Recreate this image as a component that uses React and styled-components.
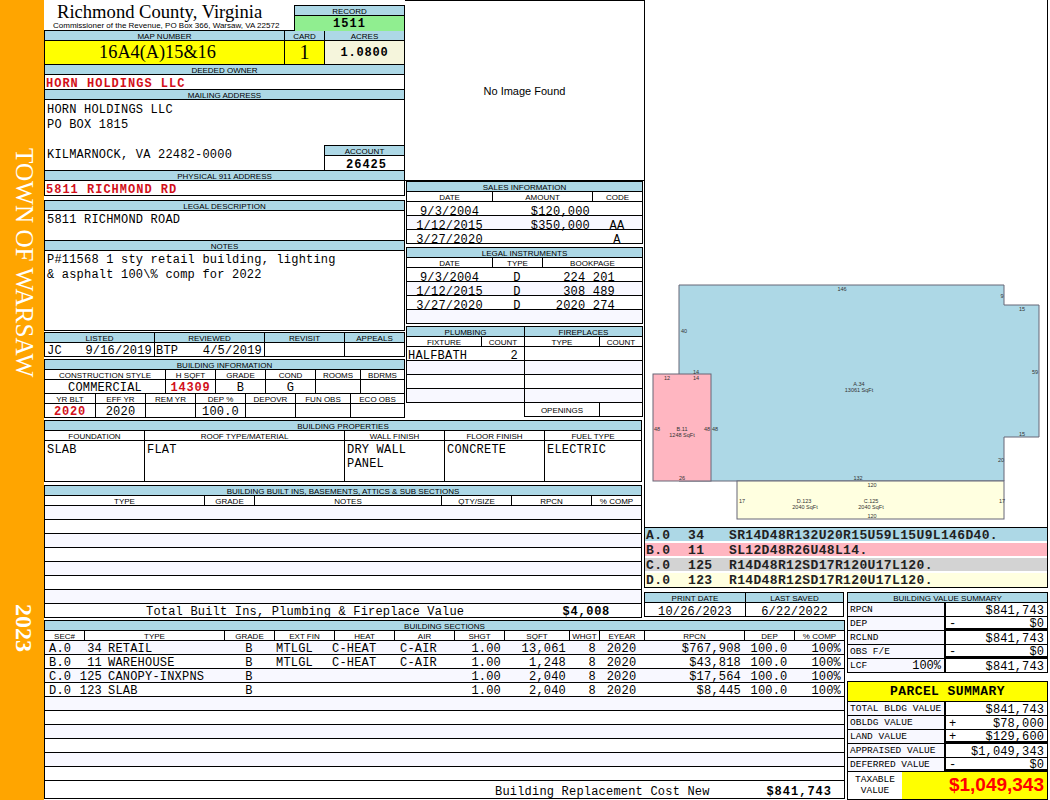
import React from 'react';
import styled, { createGlobalStyle } from 'styled-components';

const GlobalStyle = createGlobalStyle`
  * { box-sizing: border-box; }
  html, body { margin: 0; padding: 0; background: #fff; }
  body { font-family: "Liberation Mono", monospace; font-size: 12px; color: #000; }
`;

const BLUE = '#add8e6';
const GHOST = '#f8f8ff';
const RED = '#d2101a';

const Page = styled.div`
  display: flex;
  width: 1050px;
  height: 800px;
  overflow: hidden;
`;

const Sidebar = styled.aside`
  width: 44px;
  height: 800px;
  flex: none;
  background: #ffa500;
  color: #fff;
  display: flex;
  flex-direction: column;
  align-items: center;
  font-family: "Liberation Serif", serif;
`;

const SideTown = styled.div`
  writing-mode: vertical-rl;
  margin: 148px 0 0 3px;
  font-size: 25.2px;
  line-height: 30px;
  white-space: nowrap;
`;

const SideYear = styled.div`
  writing-mode: vertical-rl;
  margin: 227px 0 0 3px;
  font-size: 24px;
  line-height: 30px;
  font-weight: bold;
`;

const Sheet = styled.main`
  display: grid;
  grid-template-columns: 600px 201px 203px;
  grid-template-rows: 590px 30px 180px;
  grid-template-areas:
    "left sketch sketch"
    "left print summary"
    "sections sections summary";
`;

const LeftArea = styled.div`
  grid-area: left;
  display: flex;
  flex-direction: column;
`;

const Upper = styled.div`
  display: flex;
  height: 418px;
`;

const OwnerCol = styled.div`
  width: 361px;
  flex: none;
`;

const MidCol = styled.div`
  width: 239px;
  flex: none;
`;

const TitleRow = styled.div`
  display: flex;
  height: 30px;
`;

const TitleText = styled.div`
  width: 250px;
`;

const CountyName = styled.div`
  font-family: "Liberation Serif", serif;
  font-size: 18.6px;
  line-height: 20px;
  height: 20px;
  margin: 2px 0 0 13px;
  white-space: nowrap;
`;

const CountySub = styled.div`
  font-family: "Liberation Sans", sans-serif;
  font-size: 8px;
  line-height: 8px;
  margin-left: 9px;
  white-space: nowrap;
`;

const RecordBox = styled.div`
  width: 111px;
  height: 25px;
  margin-top: 5px;
  border: 1px solid #000;
  border-bottom: 0;
`;

const RecordValue = styled.div`
  height: 15px;
  background: #90ee90;
  text-align: center;
  font-weight: bold;
  line-height: 17px;
  letter-spacing: 1px;
`;

const Panel = styled.section`
  width: ${p => p.$w}px;
  margin-top: ${p => p.$mt || 0}px;
  margin-left: ${p => p.$ml || 0}px;
  border: 1px solid #000;
  border-bottom: 0;
  flex: none;
`;

const BarHead = styled.div`
  height: 10px;
  padding-top: 1px;
  background: ${BLUE};
  border-bottom: 1px solid #000;
  font-family: "Liberation Sans", sans-serif;
  font-size: 8px;
  line-height: 9px;
  text-align: center;
  white-space: nowrap;
`;

const Row = styled.div`
  display: grid;
  grid-template-columns: ${p => p.$cols || '1fr'};
  grid-template-rows: minmax(0, 1fr);
  height: ${p => p.$h || 14}px;
  background: ${p => p.$bg || (p.$alt ? GHOST : '#fff')};
  border-bottom: 1px solid #000;
`;

const Label = styled.div`
  display: flex;
  align-items: center;
  justify-content: center;
  min-width: 0;
  min-height: 0;
  padding-top: 2px;
  font-family: "Liberation Sans", sans-serif;
  font-size: 8px;
  white-space: nowrap;
  &:not(:first-child) { border-left: 1px solid #000; }
`;

const alignments = {
  right: 'flex-end',
  center: 'center',
  between: 'space-between',
};

// $dy moves the text down inside its row, $open drops the column rule
const Cell = styled.div`
  display: flex;
  align-items: ${p => p.$top ? 'flex-start' : 'center'};
  justify-content: ${p => alignments[p.$align] || 'flex-start'};
  min-width: 0;
  min-height: 0;
  padding: ${p => (p.$dy ?? 1) * 2}px ${p => p.$pr ?? 2}px 0 ${p => p.$pl ?? 2}px;
  background: ${p => p.$bg || 'transparent'};
  color: ${p => p.$color || '#000'};
  font-weight: ${p => p.$bold ? 'bold' : 'normal'};
  letter-spacing: ${p => p.$ls ?? 0.2}px;
  white-space: pre;
  &:not(:first-child) { border-left: ${p => p.$open ? 0 : 1}px solid #000; }
`;

const Text = styled.div`
  padding: ${p => p.$pt ?? 2}px 2px 0;
  line-height: ${p => p.$lh || 15}px;
  letter-spacing: 0.2px;
  white-space: pre-wrap;
  align-self: flex-start;
`;

const Serif = styled(Cell)`
  font-family: "Liberation Serif", serif;
  font-size: ${p => p.$size || 20}px;
  letter-spacing: 0;
  background: #ff0;
`;

const RedLine = styled.div`
  height: 15px;
  padding: 2px 0 0 1px;
  border-bottom: 1px solid #000;
  color: ${RED};
  font-weight: bold;
  line-height: 15px;
  letter-spacing: 1px;
`;

const MailingBody = styled.div`
  display: flex;
  justify-content: space-between;
  align-items: flex-end;
  height: 71px;
  border-bottom: 1px solid #000;
`;

const AccountBox = styled.div`
  width: 80px;
  border-top: 1px solid #000;
  border-left: 1px solid #000;
`;

const AccountValue = styled.div`
  height: 14px;
  padding: 2px 0 0 4px;
  line-height: 14px;
  text-align: center;
  font-weight: bold;
  letter-spacing: 1px;
`;

const TextBlock = styled.div`
  height: ${p => p.$h}px;
  border-bottom: 1px solid #000;
`;

const ImageBox = styled.div`
  display: flex;
  align-items: center;
  justify-content: center;
  height: 181px;
  border-top: 1px solid #000;
  border-bottom: 1px solid #000;
  font-family: "Liberation Sans", sans-serif;
  font-size: 11px;
`;

const PlumbingWrap = styled.div`
  display: flex;
  align-items: flex-start;
`;

const SketchArea = styled.div`
  grid-area: sketch;
  display: flex;
  flex-direction: column;
`;

const SketchBox = styled.div`
  height: 528px;
  border: 1px solid #000;
  border-top: 0;
  svg { display: block; }
`;

const SketchLabel = styled.text`
  font-family: "Liberation Sans", sans-serif;
  font-size: 5.5px;
  fill: #333;
  text-anchor: middle;
`;

const Legend = styled.div`
  border: 1px solid #000;
  border-top: 0;
`;

const LegendRow = styled.div`
  display: grid;
  grid-template-columns: 42px 41px 1fr;
  height: 15px;
  padding: 1px 0 0 1px;
  background: ${p => p.$bg};
  border-bottom: 2px solid #fff;
  font-size: 13px;
  font-weight: bold;
  line-height: 14px;
  color: #222;
  letter-spacing: 0.35px;
  white-space: pre;
  &:last-child { border-bottom: 0; height: 14px; }
`;

const PrintArea = styled.div`
  grid-area: print;
  padding-top: 2px;
`;

const SummaryArea = styled.div`
  grid-area: summary;
  padding: 2px 0 0 2px;
`;

const SumPanel = styled.section`
  width: 201px;
  margin-top: ${p => p.$mt || 0}px;
  border: 1px solid #000;
  border-bottom: ${p => p.$open ? 0 : '1px solid #000'};
`;

const SumRow = styled.div`
  display: grid;
  grid-template-columns: 98px 1fr;
  grid-template-rows: minmax(0, 1fr);
  height: 14px;
`;

const SumKey = styled.div`
  display: flex;
  align-items: center;
  justify-content: space-between;
  min-height: 0;
  padding: 0 3px 0 2px;
  background: ${GHOST};
  border-bottom: 1px solid #000;
  border-right: 2px solid #000;
  font-size: 9.5px;
  white-space: pre;
`;

const SumPercent = styled.span`
  font-size: 12px;
`;

const SumValue = styled.div`
  display: flex;
  align-items: center;
  justify-content: space-between;
  min-height: 0;
  padding: 2px 3px 0;
  border-bottom: ${p => p.$heavy ? 3 : 1}px solid #000;
  letter-spacing: 0.1px;
`;

const ParcelHead = styled.div`
  height: 20px;
  background: #ff0;
  border-bottom: 1px solid #000;
  text-align: center;
  font-size: 13px;
  font-weight: bold;
  line-height: 19px;
  letter-spacing: 0.4px;
  white-space: pre;
`;

const TaxRow = styled.div`
  display: grid;
  grid-template-columns: 54px 1fr;
  height: 27px;
`;

const TaxKey = styled.div`
  font-size: 9.5px;
  line-height: 11px;
  padding-top: 2px;
  text-align: center;
`;

const TaxValue = styled.div`
  background: #ff0;
  color: #f00;
  font-family: "Liberation Sans", sans-serif;
  font-size: 19px;
  font-weight: bold;
  line-height: 26px;
  text-align: right;
  padding-right: 3px;
`;

const SectionsArea = styled.div`
  grid-area: sections;
`;

const MAP_COLS = '239px 40px 80px';
const LISTED_COLS = '109px 110px 80px 60px';
const INFO_A = '120px 50px 50px 50px 45px 44px';
const INFO_B = '50px 50px 50px 50px 50px 55px 54px';
const SALES_COLS = '85px 100px 50px';
const LEGAL_COLS = '85px 50px 100px';
const PLUMB_COLS = '74px 43px';
const FIRE_COLS = '74px 43px';
const PROP_COLS = '99px 200px 100px 100px 97px';
const BUILT_COLS = '159px 50px 187px 70px 80px 50px';
const SEC_HEAD_COLS = '39px 140px 50px 60px 60px 60px 50px 65px 30px 45px 100px 50px 50px';
const SEC_ROW_COLS = '30px 27px 122px 50px 58px 68px 54px 50px 65px 30px 45px 100px 50px 50px';

const sales = [
  ['9/3/2004', '$120,000', ''],
  ['1/12/2015', '$350,000', 'AA'],
  ['3/27/2020', '', 'A'],
];

const instruments = [
  ['9/3/2004', 'D', '224 201'],
  ['1/12/2015', 'D', '308 489'],
  ['3/27/2020', 'D', '2020 274'],
  ['', '', ''],
];

const sections = [
  ['A.0', '34', 'RETAIL', 'B', 'MTLGL', 'C-HEAT', 'C-AIR', '1.00', '13,061', '8', '2020', '$767,908', '100.0', '100%'],
  ['B.0', '11', 'WAREHOUSE', 'B', 'MTLGL', 'C-HEAT', 'C-AIR', '1.00', '1,248', '8', '2020', '$43,818', '100.0', '100%'],
  ['C.0', '125', 'CANOPY-INXPNS', 'B', '', '', '', '1.00', '2,040', '8', '2020', '$17,564', '100.0', '100%'],
  ['D.0', '123', 'SLAB', 'B', '', '', '', '1.00', '2,040', '8', '2020', '$8,445', '100.0', '100%'],
];

const sketchLabels = [
  [842, 291, '146'], [1002, 298, '9'], [1022, 311, '15'], [684, 333, '40'],
  [696, 374, '14'], [667, 380, '12'], [696, 380, '14'], [1035, 374, '59'],
  [859, 386, 'A.34'], [859, 392, '13061 SqFt'], [657, 431, '48'], [682, 431, 'B.11'],
  [682, 437, '1248 SqFt'], [707, 431, '48'], [715, 431, '48'], [1022, 436, '15'],
  [1001, 462, '20'], [682, 480, '26'], [858, 480, '132'], [872, 487, '120'],
  [742, 503, '17'], [804, 503, 'D.123'], [805, 509, '2040 SqFt'], [871, 503, 'C.125'],
  [871, 509, '2040 SqFt'], [1002, 503, '17'], [872, 518, '120'],
];

const Labels = ({ items }) => items.map((t, i) => <Label key={i}>{t}</Label>);

function Sketch() {
  return (
    <svg width="402" height="527" viewBox="645 0 402 527">
      <polygon points="679,285 1004,285 1004,305 1039,305 1039,437 1004,437 1004,481 679,481" fill="#add8e6" stroke="#667" />
      <rect x="737" y="481" width="267" height="38" fill="#ffffe0" stroke="#667" />
      <rect x="653" y="374" width="58" height="107" fill="#ffb6c1" stroke="#667" />
      {sketchLabels.map(([x, y, t], i) => (
        <SketchLabel key={i} x={x} y={y}>{t}</SketchLabel>
      ))}
    </svg>
  );
}

export default function App() {
  return (
    <Page>
      <GlobalStyle />
      <Sidebar>
        <SideTown>TOWN OF WARSAW</SideTown>
        <SideYear>2023</SideYear>
      </Sidebar>
      <Sheet>
        <LeftArea>
          <Upper>
            <OwnerCol>
              <TitleRow>
                <TitleText>
                  <CountyName>Richmond County, Virginia</CountyName>
                  <CountySub>Commissioner of the Revenue, PO Box 366, Warsaw, VA 22572</CountySub>
                </TitleText>
                <RecordBox>
                  <BarHead>RECORD</BarHead>
                  <RecordValue>1511</RecordValue>
                </RecordBox>
              </TitleRow>
              <Panel $w={361}>
                <Row $cols={MAP_COLS} $h={10} $bg={BLUE}>
                  <Labels items={['MAP NUMBER', 'CARD', 'ACRES']} />
                </Row>
                <Row $cols={MAP_COLS} $h={24}>
                  <Serif $align="center" $size={18.3} $dy={0} $pr={16}>16A4(A)15&amp;16</Serif>
                  <Serif $align="center" $dy={0}>1</Serif>
                  <Cell $align="center" $bold $bg="#f5f5dc" $ls={0.8} $dy={0}>1.0800</Cell>
                </Row>
                <BarHead>DEEDED OWNER</BarHead>
                <RedLine>HORN HOLDINGS LLC</RedLine>
                <BarHead>MAILING ADDRESS</BarHead>
                <MailingBody>
                  <Text $pt={3}>{'HORN HOLDINGS LLC\nPO BOX 1815\n\nKILMARNOCK, VA 22482-0000'}</Text>
                  <AccountBox>
                    <BarHead>ACCOUNT</BarHead>
                    <AccountValue>26425</AccountValue>
                  </AccountBox>
                </MailingBody>
                <BarHead>PHYSICAL 911 ADDRESS</BarHead>
                <RedLine>5811 RICHMOND RD</RedLine>
              </Panel>
              <Panel $w={361} $mt={4}>
                <BarHead>LEGAL DESCRIPTION</BarHead>
                <TextBlock $h={30}><Text>5811 RICHMOND ROAD</Text></TextBlock>
                <BarHead>NOTES</BarHead>
                <TextBlock $h={80}>
                  <Text>{'P#11568 1 sty retail building, lighting\n& asphalt 100\\% comp for 2022'}</Text>
                </TextBlock>
              </Panel>
              <Panel $w={361} $mt={1}>
                <Row $cols={LISTED_COLS} $h={10} $bg={BLUE}>
                  <Labels items={['LISTED', 'REVIEWED', 'REVISIT', 'APPEALS']} />
                </Row>
                <Row $cols={LISTED_COLS}>
                  <Cell $align="between" $pl={2} $pr={2}><span>JC</span><span>9/16/2019</span></Cell>
                  <Cell $align="between" $pl={1} $pr={2}><span>BTP</span><span>4/5/2019</span></Cell>
                  <Cell />
                  <Cell />
                </Row>
              </Panel>
              <Panel $w={361} $mt={2}>
                <BarHead>BUILDING INFORMATION</BarHead>
                <Row $cols={INFO_A} $h={10}>
                  <Labels items={['CONSTRUCTION STYLE', 'H SQFT', 'GRADE', 'COND', 'ROOMS', 'BDRMS']} />
                </Row>
                <Row $cols={INFO_A}>
                  <Cell $align="center">COMMERCIAL</Cell>
                  <Cell $align="center" $bold $color={RED} $ls={0.8}>14309</Cell>
                  <Cell $align="center">B</Cell>
                  <Cell $align="center">G</Cell>
                  <Cell />
                  <Cell />
                </Row>
                <Row $cols={INFO_B} $h={10}>
                  <Labels items={['YR BLT', 'EFF YR', 'REM YR', 'DEP %', 'DEPOVR', 'FUN OBS', 'ECO OBS']} />
                </Row>
                <Row $cols={INFO_B}>
                  <Cell $align="center" $bold $color={RED} $ls={0.8}>2020</Cell>
                  <Cell $align="center">2020</Cell>
                  <Cell />
                  <Cell $align="center">100.0</Cell>
                  <Cell />
                  <Cell />
                  <Cell />
                </Row>
              </Panel>
            </OwnerCol>
            <MidCol>
              <ImageBox>No Image Found</ImageBox>
              <Panel $w={237} $ml={1}>
                <BarHead>SALES INFORMATION</BarHead>
                <Row $cols={SALES_COLS} $h={10}>
                  <Labels items={['DATE', 'AMOUNT', 'CODE']} />
                </Row>
                {sales.map((r, i) => (
                  <Row key={i} $cols={SALES_COLS} $alt={i % 2 === 1}>
                    <Cell $open $dy={3} $align="center">{r[0]}</Cell>
                    <Cell $open $dy={3} $align="right">{r[1]}</Cell>
                    <Cell $open $dy={3} $align="center">{r[2]}</Cell>
                  </Row>
                ))}
              </Panel>
              <Panel $w={237} $ml={1} $mt={3}>
                <BarHead>LEGAL INSTRUMENTS</BarHead>
                <Row $cols={LEGAL_COLS} $h={10}>
                  <Labels items={['DATE', 'TYPE', 'BOOKPAGE']} />
                </Row>
                {instruments.map((r, i) => (
                  <Row key={i} $cols={LEGAL_COLS} $alt={i % 2 === 1}>
                    <Cell $open $dy={3} $align="center">{r[0]}</Cell>
                    <Cell $open $dy={3} $align="center">{r[1]}</Cell>
                    <Cell $open $dy={3} $align="right" $pr={27}>{r[2]}</Cell>
                  </Row>
                ))}
              </Panel>
              <PlumbingWrap>
                <Panel $w={119} $ml={1} $mt={2}>
                  <BarHead>PLUMBING</BarHead>
                  <Row $cols={PLUMB_COLS} $h={10}>
                    <Labels items={['FIXTURE', 'COUNT']} />
                  </Row>
                  <Row $cols={PLUMB_COLS}>
                    <Cell $open $dy={2} $pl={1}>HALFBATH</Cell>
                    <Cell $open $dy={2} $align="right" $pr={6}>2</Cell>
                  </Row>
                  <Row $alt />
                  <Row />
                  <Row $alt />
                </Panel>
                <Panel $w={119} $ml={-1} $mt={2}>
                  <BarHead>FIREPLACES</BarHead>
                  <Row $cols={FIRE_COLS} $h={10}>
                    <Labels items={['TYPE', 'COUNT']} />
                  </Row>
                  <Row />
                  <Row $alt />
                  <Row />
                  <Row $alt />
                  <Row $cols={FIRE_COLS}>
                    <Label>OPENINGS</Label>
                    <Label />
                  </Row>
                </Panel>
              </PlumbingWrap>
            </MidCol>
          </Upper>
          <Panel $w={598} $mt={2}>
            <BarHead>BUILDING PROPERTIES</BarHead>
            <Row $cols={PROP_COLS} $h={10}>
              <Labels items={['FOUNDATION', 'ROOF TYPE/MATERIAL', 'WALL FINISH', 'FLOOR FINISH', 'FUEL TYPE']} />
            </Row>
            <Row $cols={PROP_COLS} $h={41}>
              {['SLAB', 'FLAT', 'DRY WALL\nPANEL', 'CONCRETE', 'ELECTRIC'].map((t, i) => (
                <Cell key={i} $top $dy={0} $pl={0} $pr={0}>
                  <Text $lh={14}>{t}</Text>
                </Cell>
              ))}
            </Row>
          </Panel>
          <Panel $w={598} $mt={3}>
            <BarHead>BUILDING BUILT INS, BASEMENTS, ATTICS &amp; SUB SECTIONS</BarHead>
            <Row $cols={BUILT_COLS} $h={10}>
              <Labels items={['TYPE', 'GRADE', 'NOTES', 'QTY/SIZE', 'RPCN', '% COMP']} />
            </Row>
            {[0, 1, 2, 3, 4, 5, 6].map(i => <Row key={i} $alt={i % 2 === 0} />)}
            <Row $cols="1fr auto">
              <Cell $pl={101}>Total Built Ins, Plumbing &amp; Fireplace Value</Cell>
              <Cell $open $bold $pr={31} $ls={0.7}>$4,008</Cell>
            </Row>
          </Panel>
        </LeftArea>

        <SketchArea>
          <SketchBox><Sketch /></SketchBox>
          <Legend>
            <LegendRow $bg="#add8e6"><span>A.0</span><span>34</span><span>SR14D48R132U20R15U59L15U9L146D40.</span></LegendRow>
            <LegendRow $bg="#ffb6c1"><span>B.0</span><span>11</span><span>SL12D48R26U48L14.</span></LegendRow>
            <LegendRow $bg="#d3d3d3"><span>C.0</span><span>125</span><span>R14D48R12SD17R120U17L120.</span></LegendRow>
            <LegendRow $bg="#ffffe0"><span>D.0</span><span>123</span><span>R14D48R12SD17R120U17L120.</span></LegendRow>
          </Legend>
        </SketchArea>

        <PrintArea>
          <Panel $w={200}>
            <Row $cols="100px 98px" $h={10} $bg={BLUE}>
              <Labels items={['PRINT DATE', 'LAST SAVED']} />
            </Row>
            <Row $cols="100px 98px">
              <Cell $dy={2} $align="center">10/26/2023</Cell>
              <Cell $dy={2} $align="center">6/22/2022</Cell>
            </Row>
          </Panel>
        </PrintArea>

        <SummaryArea>
          <SumPanel $open>
            <BarHead>BUILDING VALUE SUMMARY</BarHead>
            <SumRow><SumKey>RPCN</SumKey><SumValue><span /><span>$841,743</span></SumValue></SumRow>
            <SumRow><SumKey>DEP</SumKey><SumValue $heavy><span>-</span><span>$0</span></SumValue></SumRow>
            <SumRow><SumKey>RCLND</SumKey><SumValue><span /><span>$841,743</span></SumValue></SumRow>
            <SumRow><SumKey>OBS F/E</SumKey><SumValue $heavy><span>-</span><span>$0</span></SumValue></SumRow>
            <SumRow>
              <SumKey>LCF<SumPercent>100%</SumPercent></SumKey>
              <SumValue><span /><span>$841,743</span></SumValue>
            </SumRow>
          </SumPanel>
          <SumPanel $mt={8}>
            <ParcelHead>PARCEL SUMMARY</ParcelHead>
            <SumRow><SumKey>TOTAL BLDG VALUE</SumKey><SumValue><span /><span>$841,743</span></SumValue></SumRow>
            <SumRow><SumKey>OBLDG VALUE</SumKey><SumValue><span>+</span><span>$78,000</span></SumValue></SumRow>
            <SumRow><SumKey>LAND VALUE</SumKey><SumValue $heavy><span>+</span><span>$129,600</span></SumValue></SumRow>
            <SumRow><SumKey>APPRAISED VALUE</SumKey><SumValue><span /><span>$1,049,343</span></SumValue></SumRow>
            <SumRow><SumKey>DEFERRED VALUE</SumKey><SumValue $heavy><span>-</span><span>$0</span></SumValue></SumRow>
            <TaxRow>
              <TaxKey>TAXABLE<br />VALUE</TaxKey>
              <TaxValue>$1,049,343</TaxValue>
            </TaxRow>
          </SumPanel>
        </SummaryArea>

        <SectionsArea>
          <Panel $w={801}>
            <BarHead>BUILDING SECTIONS</BarHead>
            <Row $cols={SEC_HEAD_COLS} $h={10}>
              <Labels items={['SEC#', 'TYPE', 'GRADE', 'EXT FIN', 'HEAT', 'AIR', 'SHGT', 'SQFT', 'WHGT', 'EYEAR', 'RPCN', 'DEP', '% COMP']} />
            </Row>
            {sections.map((r, i) => (
              <Row key={i} $cols={SEC_ROW_COLS} $alt={i % 2 === 0}>
                <Cell $open $pl={4} $pr={0}>{r[0]}</Cell>
                <Cell $open $align="right" $pl={0} $pr={0}>{r[1]}</Cell>
                <Cell $open $pl={6} $pr={0}>{r[2]}</Cell>
                <Cell $open $align="center">{r[3]}</Cell>
                <Cell $open $pl={2} $pr={0}>{r[4]}</Cell>
                <Cell $open $pl={0} $pr={0}>{r[5]}</Cell>
                <Cell $open $pl={0} $pr={0}>{r[6]}</Cell>
                <Cell $open $align="right" $pr={3}>{r[7]}</Cell>
                <Cell $open $align="right" $pr={3}>{r[8]}</Cell>
                <Cell $open $align="right" $pr={3}>{r[9]}</Cell>
                <Cell $open $align="center">{r[10]}</Cell>
                <Cell $open $align="right" $pr={3}>{r[11]}</Cell>
                <Cell $open $align="center" $pl={0} $pr={0}>{r[12]}</Cell>
                <Cell $open $align="right" $pr={3}>{r[13]}</Cell>
              </Row>
            ))}
            {[4, 5, 6, 7, 8, 9].map(i => <Row key={i} $alt={i % 2 === 0} />)}
            <Row $cols="1fr auto" $h={18}>
              <Cell $dy={2} $pl={450}>Building Replacement Cost New</Cell>
              <Cell $dy={2} $open $bold $pr={12} $ls={1}>$841,743</Cell>
            </Row>
          </Panel>
        </SectionsArea>
      </Sheet>
    </Page>
  );
}
